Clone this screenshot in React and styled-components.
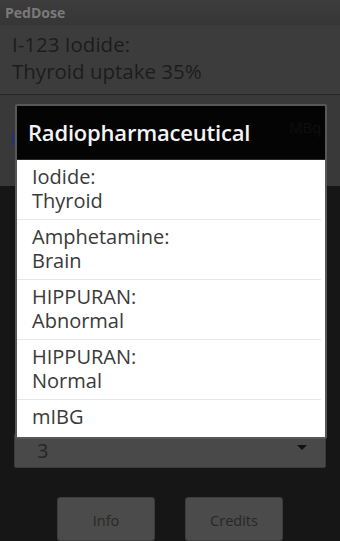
import React from "react";
import styled, { createGlobalStyle } from "styled-components";

const Global = createGlobalStyle`
  html, body { margin: 0; padding: 0; background: #151615; }
  * { box-sizing: border-box; }
`;

const Screen = styled.div`
  position: relative;
  width: 340px;
  height: 541px;
  overflow: hidden;
  background: #151615;
  font-family: "Open Sans", "Noto Sans", "DejaVu Sans", sans-serif;
  display: flex;
  flex-direction: column;
`;

const TitleBar = styled.div`
  height: 26px;
  background: linear-gradient(#3d3d3d, #363636);
  color: #7a7a7a;
  font-weight: 700;
  font-size: 14px;
  padding-left: 5px;
  display: flex;
  align-items: center;
`;

const Header = styled.div`
  height: 71px;
  background: #3c3c3c;
  border-bottom: 1px solid #262626;
  color: #1c1c1c;
  font-size: 20.5px;
  line-height: 27px;
  padding: 6px 12px 0;
`;

const InputPanel = styled.div`
  height: 93px;
  background: #383938;
  padding: 36px 10px 0;
  display: flex;
  align-items: flex-start;
`;

const Cursor = styled.div`
  width: 2px;
  height: 14px;
  background: #23346e;
  margin-left: 2px;
`;

const Body = styled.div`
  flex: 1;
  display: flex;
  flex-direction: column;
  padding: 0 14px;
`;

const Spacer = styled.div`
  height: 247px;
  flex: none;
`;

const Spinner = styled.div`
  height: 35px;
  background: #484948;
  border: 1px solid #3a3a3a;
  border-radius: 2px;
  display: flex;
  align-items: center;
  justify-content: space-between;
  padding: 0 18px 0 22px;
  color: #262626;
  font-size: 20px;
`;

const Arrow = styled.div`
  width: 0;
  height: 0;
  border-left: 5px solid transparent;
  border-right: 5px solid transparent;
  border-top: 5px solid #111;
  margin-top: -6px;
`;

const ButtonRow = styled.div`
  display: flex;
  justify-content: center;
  gap: 30px;
  margin-top: 29px;
`;

const Button = styled.div`
  width: 98px;
  height: 44px;
  background: #4a4b4a;
  border: 1px solid #3c3c3c;
  border-radius: 3px;
  color: #282828;
  font-size: 14.5px;
  display: flex;
  align-items: center;
  justify-content: center;
  padding-top: 2px;
`;

const Dialog = styled.div`
  position: absolute;
  left: 15px;
  top: 104px;
  width: 312px;
  border: 2px solid #585858;
  border-radius: 2px;
  background: #fff;
  display: flex;
  flex-direction: column;
  overflow: hidden;
`;

const DialogTitle = styled.div`
  height: 54px;
  background: #040404;
  border-bottom: 1px solid #2a2a2a;
  color: #f4f4f4;
  font-size: 22px;
  font-weight: 600;
  letter-spacing: -0.2px;
  display: flex;
  align-items: center;
  justify-content: space-between;
  padding: 0 4px 2px 11px;
`;

const Ghost = styled.span`
  color: #0f0f0f;
  font-size: 15px;
  font-weight: 400;
  margin-top: -10px;
`;

const List = styled.div`
  height: 277px;
  overflow: hidden;
  display: flex;
  flex-direction: column;
`;

const Item = styled.div`
  flex: none;
  height: 60px;
  padding: 5px 0 0 15px;
  color: #3a3a3a;
  font-size: 20px;
  line-height: 24px;
  border-bottom: 1px solid #e8e8e8;
  margin-right: 4px;
`;

const Line = styled.div`
  white-space: nowrap;
`;

const items = [
  ["Iodide:", "Thyroid"],
  ["Amphetamine:", "Brain"],
  ["HIPPURAN:", "Abnormal"],
  ["HIPPURAN:", "Normal"],
  ["mIBG"],
];

export default function App() {
  return (
    <>
      <Global />
      <Screen>
        <TitleBar>PedDose</TitleBar>
        <Header>
          <Line>I-123 Iodide:</Line>
          <Line>Thyroid uptake 35%</Line>
        </Header>
        <InputPanel>
          <Cursor />
        </InputPanel>
        <Body>
          <Spacer />
          <Spinner>
            <span>3</span>
            <Arrow />
          </Spinner>
          <ButtonRow>
            <Button>Info</Button>
            <Button>Credits</Button>
          </ButtonRow>
        </Body>
        <Dialog>
          <DialogTitle>
            Radiopharmaceutical
            <Ghost>MBq</Ghost>
          </DialogTitle>
          <List>
            {items.map((it, i) => (
              <Item key={i}>
                {it.map((t) => (
                  <Line key={t}>{t}</Line>
                ))}
              </Item>
            ))}
          </List>
        </Dialog>
      </Screen>
    </>
  );
}
